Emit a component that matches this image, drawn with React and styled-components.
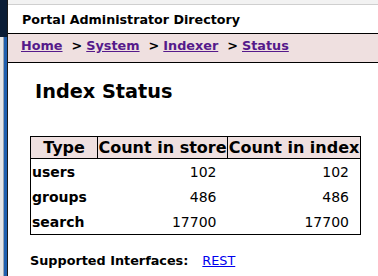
import React from 'react';
import styled, { createGlobalStyle } from 'styled-components';

const rows = [
    { type: 'users', store: 102, index: 102 },
    { type: 'groups', store: 486, index: 486 },
    { type: 'search', store: 17700, index: 17700 },
];

const App = () => {
    return (
        <Screen>
            <GlobalStyle />
            <Desktop />
            <Window>
                <TopStrip />
                <Title>Portal Administrator Directory</Title>
                <Breadcrumb>
                    <Crumb href="#">Home</Crumb>
                    <Sep>&gt;</Sep>
                    <Crumb href="#">System</Crumb>
                    <Sep>&gt;</Sep>
                    <Crumb href="#">Indexer</Crumb>
                    <Sep>&gt;</Sep>
                    <Crumb href="#">Status</Crumb>
                </Breadcrumb>
                <Content>
                    <Heading>Index Status</Heading>
                    <StatusTable>
                        <colgroup>
                            <col style={{ width: 67 }} />
                            <col style={{ width: 130 }} />
                            <col style={{ width: 133 }} />
                        </colgroup>
                        <thead>
                            <tr>
                                <Th>Type</Th>
                                <Th>Count in store</Th>
                                <Th>Count in index</Th>
                            </tr>
                        </thead>
                        <tbody>
                            {rows.map(r => (
                                <tr key={r.type}>
                                    <TypeCell>{r.type}</TypeCell>
                                    <NumCell>{r.store}</NumCell>
                                    <NumCell>{r.index}</NumCell>
                                </tr>
                            ))}
                        </tbody>
                    </StatusTable>
                    <Interfaces>
                        <Label>Supported Interfaces:</Label>
                        <RestLink href="#">REST</RestLink>
                    </Interfaces>
                </Content>
            </Window>
        </Screen>
    );
}

export default App;

// Styling
const GlobalStyle = createGlobalStyle`
    html, body {
        margin: 0;
        padding: 0;
        overflow: hidden;
        background: #ffffff;
    }
`

const Screen = styled.div`
    display: flex;
    flex-direction: row;
    width: 378px;
    height: 276px;
    overflow: hidden;
    font-family: "DejaVu Sans", Verdana, sans-serif;
    color: #000;
`

const Desktop = styled.div`
    flex: 0 0 7px;
    background:
        linear-gradient(#0b1d36, #0b1d36) top / 100% 37px no-repeat,
        linear-gradient(90deg, #e6e6e6 0 3px, #9aa4b0 3px 4px, #1f5fae 4px 7px);
`

const Window = styled.div`
    flex: 1;
    display: flex;
    flex-direction: column;
    border-left: 1px solid #1a1a1a;
    min-width: 0;
`

const TopStrip = styled.div`
    height: 4px;
    background: #f2f2f2;
    border-bottom: 1px solid #cfcfcf;
`

const Title = styled.div`
    height: 28px;
    padding-left: 14px;
    display: flex;
    align-items: center;
    font-size: 12.7px;
    font-weight: 700;
    white-space: nowrap;
    border-bottom: 1px solid #000;
`

const Breadcrumb = styled.div`
    height: 29px;
    padding: 4px 0 0 13px;
    display: flex;
    align-items: flex-start;
    box-sizing: border-box;
    background: #efe0e0;
    border-bottom: 1px solid #000;
    font-size: 12.8px;
    font-weight: 700;
    white-space: nowrap;
`

const Crumb = styled.a`
    color: #551a8b;
    text-decoration: underline;
`

const Sep = styled.span`
    margin: 0 4px 0 9px;
`

const Content = styled.div`
    padding: 17px 0 0 22px;
`

const Heading = styled.h1`
    margin: 0 0 33px 5px;
    font-size: 19.3px;
    font-weight: 700;
    white-space: nowrap;
`

const StatusTable = styled.table`
    border: 1px solid #000;
    border-collapse: collapse;
    table-layout: fixed;
    width: 331px;
    font-size: 14px;
`

const Th = styled.th`
    background: #efe0e0;
    border: 1px solid #000;
    padding: 0;
    height: 21px;
    font-size: 16px;
    font-weight: 700;
    white-space: nowrap;
    overflow: hidden;
`

const TypeCell = styled.td`
    font-weight: 700;
    padding: 0 0 0 1px;
    height: 25px;
`

const NumCell = styled.td`
    text-align: right;
    padding: 0 11px 0 0;
`

const Interfaces = styled.div`
    display: flex;
    gap: 14px;
    margin-top: 18px;
    font-size: 12.8px;
`

const Label = styled.span`
    font-weight: 700;
`

const RestLink = styled.a`
    color: #0000ee;
    text-decoration: underline;
`
